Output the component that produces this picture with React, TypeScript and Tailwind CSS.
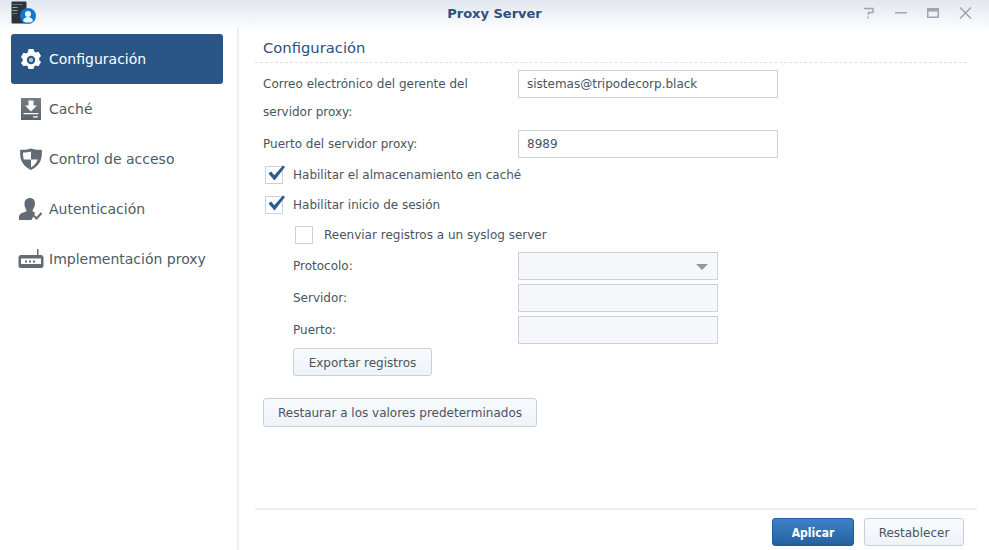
import React from "react";

function Gear() {
  return (
    <svg width="22" height="22" viewBox="0 0 22 22">
      <path fill="#fff" d="M8.500 1h5l.7 2.500 1.800 1 2.500-.7 2.500 4.300-1.800 1.900v2l1.800 1.900-2.500 4.300-2.500-.7-1.800 1-.7 2.500h-5l-.7-2.500-1.800-1-2.500.7L.9 14.900l1.800-1.900v-2L.9 9.100l2.500-4.300 2.500.7 1.800-1z" />
      <circle cx="11" cy="12" r="4.200" fill="#2a5687" />
      <circle cx="11" cy="12" r="2.200" fill="#a9bdd3" />
    </svg>
  );
}

function CacheIcon() {
  return (
    <svg width="22" height="22" viewBox="0 0 22 22">
      <defs>
        <linearGradient id="cg" x1="0" y1="0" x2="0" y2="1"><stop offset="0" stopColor="#767d85" /><stop offset="1" stopColor="#5a626b" /></linearGradient>
      </defs>
      <path fill="url(#cg)" d="M1 0h20v22H1z" />
      <path fill="#fff" d="M8.500 2.500h5v5h3.500L11 13.500 5 7.500h3.500z" />
      <path fill="#fff" d="M3.500 15h15v1.300h-15zM13 18.200h5v1.300h-5z" />
    </svg>
  );
}

function ShieldIcon() {
  return (
    <svg width="24" height="24" viewBox="0 0 24 24">
      <path fill="#636b74" d="M12 1.500c3 1 7 1.500 10.800 1.200.4 8-.2 14.800-10.800 20.300C1.400 17.500.800 10.700 1.200 2.700 5 3 9 2.500 12 1.500z" />
      <path fill="#fff" d="M12 4.500c-2.500.7-5 1.100-8 1.100 0 2.200.1 4.500.7 6.900H12zM12 12.500v8c3.700-2.200 5.600-5 6.700-8z" />
    </svg>
  );
}

function UserIcon() {
  return (
    <svg width="26" height="24" viewBox="0 0 26 24">
      <path fill="#636b74" d="M12 1c3.300 0 5 2.300 5 5.500 0 2.500-1 4.800-2.300 6.200v1.800c1 .5 1.800.8 2.500 1.200L13.500 23H1c-.3-4 .3-6 3-7l4.300-1.600v-1.700C7 11.300 6.500 9 6.500 6.500 6.500 3.300 8.700 1 12 1z" />
      <path fill="none" stroke="#636b74" strokeWidth="2" d="M15.500 18.500l3 3 5-5.500" />
    </svg>
  );
}

function RouterIcon() {
  return (
    <svg width="26" height="20" viewBox="0 0 26 20">
      <path fill="#636b74" d="M19 0h1.500v6H19zM2 6h22l1.500 2v9.500L24 19H2L.5 17.500V8z" />
      <path fill="#fff" d="M3 9.500h20V15H3z" />
      <path fill="#636b74" d="M7 11.500h2v2H7zM11 11.500h2v2h-2zM15 11.500h2v2h-2z" />
    </svg>
  );
}

function AppLogo() {
  return (
    <svg width="26" height="24" viewBox="0 0 26 24">
      <rect x="0.500" y="0.500" width="15" height="22" rx="1" fill="#2a3340" />
      <path fill="#7fc96a" d="M1.500 6h5v1h-5zM1.500 9h5v1h-5z" />
      <path fill="#6a7480" d="M1.500 3h10v1h-10zM1.500 12h5v1h-5z" />
      <circle cx="17" cy="15" r="8" fill="#1478d0" />
      <circle cx="17" cy="13" r="3" fill="#e8f4ff" />
      <path fill="#e8f4ff" d="M12 20c.5-3 3-4 5-4s4.500 1 5 4c-2.500 2-7.500 2-10 0z" />
    </svg>
  );
}

function Check() {
  return (
    <svg className="absolute left-[1px] top-[-3px]" width="19" height="19" viewBox="0 0 19 19">
      <path fill="#2d5a8e" d="M1.500 9.500l2.500-2 3.300 3.700L16 1.500l2 1.500L7.500 16.500z" />
    </svg>
  );
}

function Checkbox({ label, checked, indent }: { label: string; checked?: boolean; indent?: boolean }) {
  return (
    <div className={`flex h-[30px] items-center ${indent ? "pl-[32px]" : "pl-[2px]"}`}>
      <div className="relative h-[18px] w-[18px] border border-[#c8d2dc] bg-white">{checked && <Check />}</div>
      <span className={indent ? "ml-[11px]" : "ml-[10px]"}>{label}</span>
    </div>
  );
}

function Side({ icon, label, active }: { icon: React.ReactNode; label: string; active?: boolean }) {
  return (
    <div className={`flex h-[50px] items-center rounded-[3px] ${active ? "bg-[#2a5687] text-white" : "text-[#505a64]"}`}>
      <div className="flex w-[38px] shrink-0 justify-center pl-[2px]">{icon}</div>
      <span className="text-[14px]">{label}</span>
    </div>
  );
}

function SubRow({ label, children }: { label: string; children: React.ReactNode }) {
  return (
    <div className="flex h-[28px] items-center">
      <span className="w-[255px] pl-[30px]">{label}</span>
      {children}
    </div>
  );
}

const disabledBox = "relative h-[28px] w-[200px] border border-[#c8d2dc] bg-[#f5f7fa]";
const btn = "flex h-[28px] items-center justify-center rounded-[3px] border border-[#c5d0dc] bg-gradient-to-b from-[#f8fbfe] to-[#eef3f8] pt-[1px] text-[#4a545e]";

export default function App() {
  return (
    <div className="flex h-[550px] w-[989px] flex-col overflow-hidden bg-white text-[12px] text-[#4a545e]" style={{ fontFamily: '"DejaVu Sans", sans-serif' }}>
      <header className="relative flex h-[28px] shrink-0 items-center justify-center bg-gradient-to-b from-[#e2e7ef] to-[#fbfcfd]">
        <div className="absolute left-[11px] top-[1px]"><AppLogo /></div>
        <span className="text-[13px] font-bold text-[#2f4f7c]">Proxy Server</span>
        <div className="absolute right-[17px] top-[7px] flex items-center gap-[20px]">
          <svg width="12" height="12" viewBox="0 0 12 12"><path fill="none" stroke="#a0a5ad" strokeWidth="1.500" d="M1 1.500h9v4H5.500v2.500M5 9.500v2" /></svg>
          <svg width="12" height="12" viewBox="0 0 12 12"><path fill="#a0a5ad" d="M0 5h12v1.500H0z" /></svg>
          <svg width="12" height="12" viewBox="0 0 12 12"><path fill="#a0a5ad" fillRule="evenodd" d="M0 1h12v10H0zM1.500 4.500v5h9v-5z" /></svg>
          <svg width="13" height="12" viewBox="0 0 13 12"><path fill="none" stroke="#a0a5ad" strokeWidth="1.500" d="M1 .5l11 11M12 .5L1 11.500" /></svg>
        </div>
      </header>

      <div className="flex min-h-0 flex-1">
        <aside className="w-[239px] shrink-0 border-r-2 border-[#eceef0] pl-[11px] pr-[14px] pt-[6px]">
          <Side active icon={<Gear />} label="Configuración" />
          <Side icon={<CacheIcon />} label="Caché" />
          <Side icon={<ShieldIcon />} label="Control de acceso" />
          <Side icon={<UserIcon />} label="Autenticación" />
          <Side icon={<RouterIcon />} label="Implementación proxy" />
        </aside>

        <main className="flex min-w-0 flex-1 flex-col pl-[16px] pr-[12px]">
          <div className="flex-1 pr-[10px]">
            <h1 className="flex h-[35px] items-end border-b border-dashed border-[#dbe3e6] pb-[3px] pl-[8px] text-[14.750px] font-normal text-[#2f4f7c]">Configuración</h1>
            <div className="pl-[8px] pt-[7px]">
              <div className="flex">
                <div className="w-[255px] leading-[28px]">Correo electrónico del gerente del<br />servidor proxy:</div>
                <div className="flex h-[28px] w-[260px] items-center border border-[#c8d2dc] bg-white px-[8px]">sistemas@tripodecorp.black</div>
              </div>
              <div className="mt-[4px] flex h-[28px] items-center">
                <div className="w-[255px]">Puerto del servidor proxy:</div>
                <div className="flex h-[28px] w-[260px] items-center border border-[#c8d2dc] bg-white px-[8px]">8989</div>
              </div>
              <div className="mt-[2px]">
                <Checkbox checked label="Habilitar el almacenamiento en caché" />
                <Checkbox checked label="Habilitar inicio de sesión" />
                <Checkbox indent label="Reenviar registros a un syslog server" />
              </div>
              <div className="mt-[2px] flex flex-col gap-[4px]">
                <SubRow label="Protocolo:">
                  <div className={disabledBox}>
                    <svg className="absolute right-[9px] top-[11px]" width="12" height="6" viewBox="0 0 12 6"><path fill="#8f98a2" d="M0 0h12L6 6z" /></svg>
                  </div>
                </SubRow>
                <SubRow label="Servidor:"><div className={disabledBox} /></SubRow>
                <SubRow label="Puerto:"><div className={disabledBox} /></SubRow>
              </div>
              <div className="mt-[4px] pl-[30px]">
                <button className={`${btn} w-[139px]`}>Exportar registros</button>
              </div>
              <button className={`${btn} mt-[22px] h-[29px] w-[274px]`}>Restaurar a los valores predeterminados</button>
            </div>
          </div>
          <footer className="flex h-[42px] shrink-0 items-start justify-end gap-[10px] border-t-2 border-[#eceef0] pr-[13px] pt-[8px]">
            <button className="flex h-[28px] w-[82px] items-center justify-center rounded-[3px] border border-[#22599c] bg-gradient-to-b from-[#3f81c9] to-[#24619f] pt-[1px] font-bold text-white [font-stretch:condensed]">Aplicar</button>
            <button className={`${btn} w-[100px]`}>Restablecer</button>
          </footer>
        </main>
      </div>
    </div>
  );
}
